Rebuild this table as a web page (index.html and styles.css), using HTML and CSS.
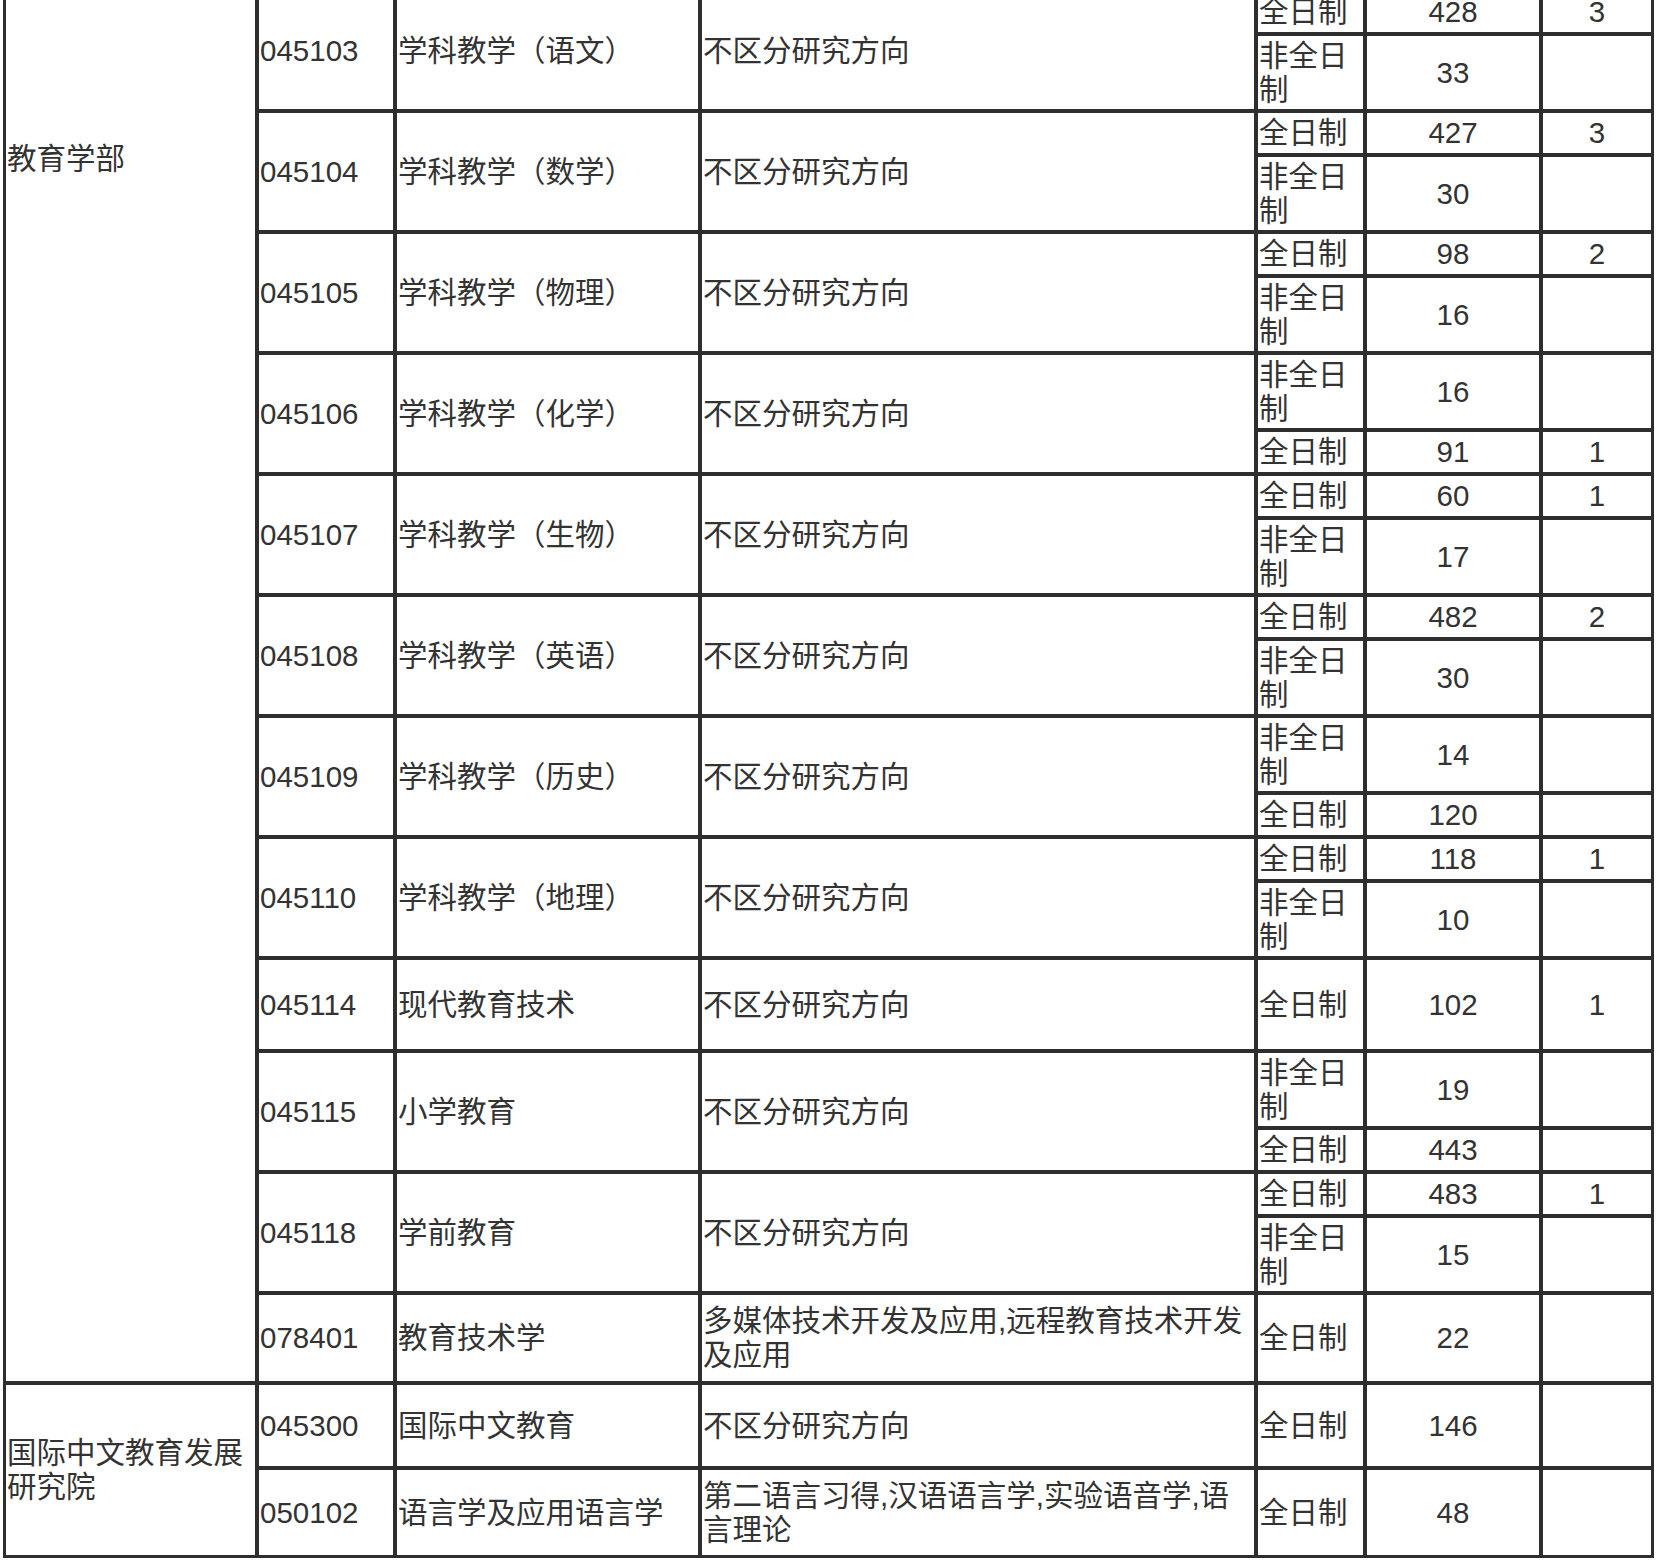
FILE: index.html
```html
<!DOCTYPE html>
<html lang="zh-CN">
<head>
<meta charset="utf-8">
<title>招生计划</title>
<link rel="stylesheet" href="styles.css">
</head>
<body>
<table class="plan">
<colgroup>
<col class="c-dept"><col class="c-code"><col class="c-name"><col class="c-dir"><col class="c-mode"><col class="c-num"><col class="c-ex">
</colgroup>
<tbody>
<tr class="s"><td class="dept" rowspan="22">教育学部</td><td rowspan="2">045103</td><td rowspan="2">学科教学（语文）</td><td rowspan="2">不区分研究方向</td><td>全日制</td><td class="n">428</td><td class="n">3</td></tr>
<tr class="d"><td>非全日制</td><td class="n">33</td><td class="n"></td></tr>

<tr class="s"><td rowspan="2">045104</td><td rowspan="2">学科教学（数学）</td><td rowspan="2">不区分研究方向</td><td>全日制</td><td class="n">427</td><td class="n">3</td></tr>
<tr class="d"><td>非全日制</td><td class="n">30</td><td class="n"></td></tr>

<tr class="s"><td rowspan="2">045105</td><td rowspan="2">学科教学（物理）</td><td rowspan="2">不区分研究方向</td><td>全日制</td><td class="n">98</td><td class="n">2</td></tr>
<tr class="d"><td>非全日制</td><td class="n">16</td><td class="n"></td></tr>

<tr class="d"><td rowspan="2">045106</td><td rowspan="2">学科教学（化学）</td><td rowspan="2">不区分研究方向</td><td>非全日制</td><td class="n">16</td><td class="n"></td></tr>
<tr class="s"><td>全日制</td><td class="n">91</td><td class="n">1</td></tr>

<tr class="s"><td rowspan="2">045107</td><td rowspan="2">学科教学（生物）</td><td rowspan="2">不区分研究方向</td><td>全日制</td><td class="n">60</td><td class="n">1</td></tr>
<tr class="d"><td>非全日制</td><td class="n">17</td><td class="n"></td></tr>

<tr class="s"><td rowspan="2">045108</td><td rowspan="2">学科教学（英语）</td><td rowspan="2">不区分研究方向</td><td>全日制</td><td class="n">482</td><td class="n">2</td></tr>
<tr class="d"><td>非全日制</td><td class="n">30</td><td class="n"></td></tr>

<tr class="d"><td rowspan="2">045109</td><td rowspan="2">学科教学（历史）</td><td rowspan="2">不区分研究方向</td><td>非全日制</td><td class="n">14</td><td class="n"></td></tr>
<tr class="s"><td>全日制</td><td class="n">120</td><td class="n"></td></tr>

<tr class="s"><td rowspan="2">045110</td><td rowspan="2">学科教学（地理）</td><td rowspan="2">不区分研究方向</td><td>全日制</td><td class="n">118</td><td class="n">1</td></tr>
<tr class="d"><td>非全日制</td><td class="n">10</td><td class="n"></td></tr>

<tr class="r-114"><td>045114</td><td>现代教育技术</td><td>不区分研究方向</td><td>全日制</td><td class="n">102</td><td class="n">1</td></tr>

<tr class="d"><td rowspan="2">045115</td><td rowspan="2">小学教育</td><td rowspan="2">不区分研究方向</td><td>非全日制</td><td class="n">19</td><td class="n"></td></tr>
<tr class="s"><td>全日制</td><td class="n">443</td><td class="n"></td></tr>

<tr class="s"><td rowspan="2">045118</td><td rowspan="2">学前教育</td><td rowspan="2">不区分研究方向</td><td>全日制</td><td class="n">483</td><td class="n">1</td></tr>
<tr class="d"><td>非全日制</td><td class="n">15</td><td class="n"></td></tr>

<tr class="r-078"><td>078401</td><td>教育技术学</td><td>多媒体技术开发及应用,远程教育技术开发及应用</td><td>全日制</td><td class="n">22</td><td class="n"></td></tr>

<tr class="r-453"><td rowspan="2">国际中文教育发展研究院</td><td>045300</td><td>国际中文教育</td><td>不区分研究方向</td><td>全日制</td><td class="n">146</td><td class="n"></td></tr>
<tr class="r-050"><td>050102</td><td>语言学及应用语言学</td><td>第二语言习得,汉语语言学,实验语音学,语言理论</td><td>全日制</td><td class="n">48</td><td class="n"></td></tr>
</tbody>
</table>
</body>
</html>
```

FILE: styles.css
```css
html, body {
  margin: 0;
  padding: 0;
  background: #ffffff;
}

body {
  font-family: "Liberation Sans", "Noto Sans CJK SC", sans-serif;
  font-size: 29.5px;
  line-height: 34px;
  color: #333333;
  overflow: hidden;
}

.plan {
  border-collapse: separate;
  border-spacing: 0;
  border: 1px solid #2e2e2e;
  table-layout: fixed;
  width: 1651px;
  margin: -11px 0 0 3px;
}

.c-dept { width: 253px; }
.c-code { width: 138px; }
.c-name { width: 305px; }
.c-dir  { width: 556px; }
.c-mode { width: 109px; }
.c-num  { width: 176px; }
.c-ex   { width: 112px; }

.plan td {
  border: 2px solid #2e2e2e;
  padding: 0 1px;
  vertical-align: middle;
  text-align: left;
  box-sizing: border-box;
  overflow: hidden;
}

.plan td.n {
  text-align: center;
}

.plan td.dept {
  vertical-align: top;
  padding-top: 150px;
}

.s { height: 44px; }
.d { height: 77px; }
.r-114 { height: 93px; }
.r-078 { height: 90px; }
.r-453 { height: 85px; }
.r-050 { height: 89px; }
```
